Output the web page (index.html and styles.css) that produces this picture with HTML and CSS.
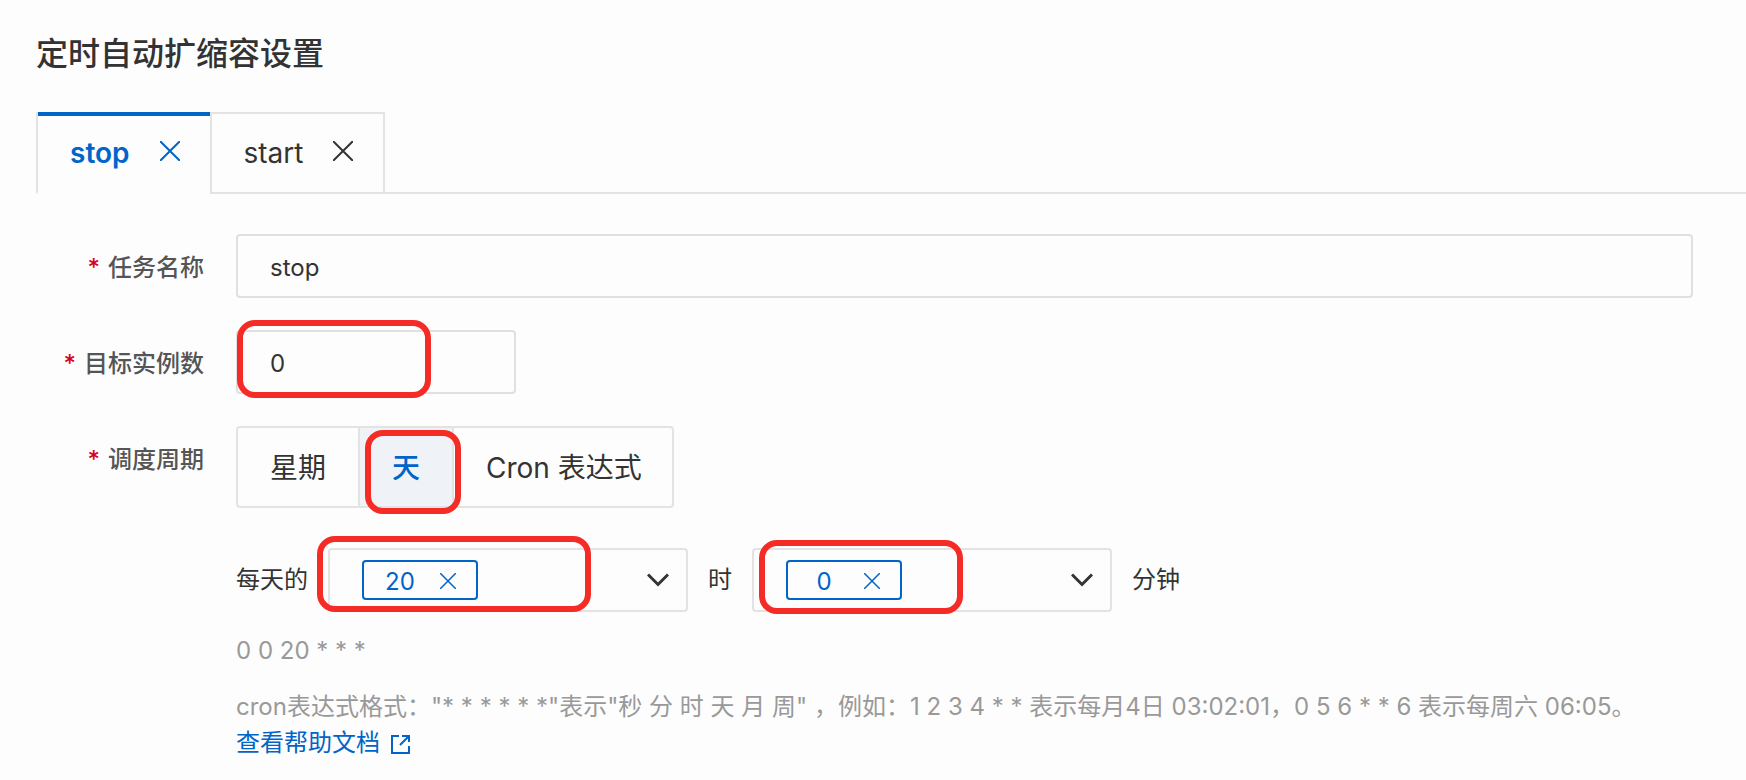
FILE: index.html
```html
<!DOCTYPE html>
<html lang="zh-CN">
<head>
    <meta charset="UTF-8">
    <meta name="viewport" content="width=device-width, initial-scale=1.0">
    <title>定时自动扩缩容设置</title>
    <link rel="stylesheet" href="styles.css">
</head>
<body>

    <h1>定时自动扩缩容设置</h1>

    <div class="tabs">
        <div class="tab active">
            <button type="button" class="tab-name">stop</button>
            <button type="button" class="close" aria-label="关闭 stop">
                <svg width="20" height="20" viewBox="0 0 20 20"><path d="M0 0L20 20M20 0L0 20"/></svg>
            </button>
        </div>
        <div class="tab">
            <button type="button" class="tab-name">start</button>
            <button type="button" class="close" aria-label="关闭 start">
                <svg width="20" height="20" viewBox="0 0 20 20"><path d="M0 0L20 20M20 0L0 20"/></svg>
            </button>
        </div>
    </div>

    <form>
        <div class="row">
            <label class="label" for="taskName">任务名称</label>
            <input class="text" type="text" id="taskName" value="stop">
        </div>

        <div class="row">
            <label class="label" for="target">目标实例数</label>
            <div class="field short">
                <input class="text" type="text" id="target" value="0">
                <span class="mark mark-target"></span>
            </div>
        </div>

        <div class="row">
            <span class="label" id="periodLabel">调度周期</span>
            <div class="field">
                <div class="radios" role="radiogroup" aria-labelledby="periodLabel">
                    <label><input type="radio" name="period" value="week"><span>星期</span></label>
                    <label><input type="radio" name="period" value="day" checked><span>天</span><i class="mark mark-day"></i></label>
                    <label><input type="radio" name="period" value="cron"><span>Cron 表达式</span></label>
                </div>

                <div class="time">
                    <label for="hour">每天的</label>
                    <div class="picker">
                        <span class="tag">
                            <span class="tag-value">20</span>
                            <button type="button" class="close" aria-label="删除 20">
                                <svg width="16" height="16" viewBox="0 0 16 16"><path d="M0 0L16 16M16 0L0 16"/></svg>
                            </button>
                        </span>
                        <select id="hour"><option></option></select>
                        <svg class="arrow" width="22" height="14" viewBox="0 0 22 14"><path d="M1 1.5L11 11.5L21 1.5"/></svg>
                        <span class="mark mark-hour"></span>
                    </div>
                    <label for="minute">时</label>
                    <div class="picker">
                        <span class="tag">
                            <span class="tag-value">0</span>
                            <button type="button" class="close" aria-label="删除 0">
                                <svg width="16" height="16" viewBox="0 0 16 16"><path d="M0 0L16 16M16 0L0 16"/></svg>
                            </button>
                        </span>
                        <select id="minute"><option></option></select>
                        <svg class="arrow" width="22" height="14" viewBox="0 0 22 14"><path d="M1 1.5L11 11.5L21 1.5"/></svg>
                        <span class="mark mark-minute"></span>
                    </div>
                    <span>分钟</span>
                </div>

                <p class="hint">0 0 20 * * *</p>
                <p class="hint">cron表达式格式："* * * * * *"表示"秒 分 时 天 月 周" ，例如：1 2 3 4 * * 表示每月4日 03:02:01，0 5 6 * * 6 表示每周六 06:05。<br>
                    <a href="#">查看帮助文档<svg width="20" height="20" viewBox="0 0 20 20"><path d="M9 2H2V19H19V12M12 2H19V8M19 2L10 11"/></svg></a>
                </p>
            </div>
        </div>
    </form>

</body>
</html>
```
FILE: styles.css
```css
* {
    box-sizing: border-box;
}
body {
    margin: 0;
    padding: 32px 0 8px 36px;
    background-color: #fdfdfd;
    color: #333;
    font-family: Inter, "Noto Sans CJK SC", sans-serif;
    font-size: 24px;
    line-height: 36px;
}
h1 {
    margin: 0 0 36px;
    font-size: 32px;
    font-weight: 500;
    line-height: 44px;
}
button, input, select {
    font: inherit;
    color: inherit;
}
button {
    padding: 0;
    border: none;
    background: none;
    cursor: pointer;
}
svg {
    fill: none;
    stroke: currentColor;
    stroke-width: 2;
}

/* tabs */
.tabs {
    display: flex;
}
.tabs::after {
    content: "";
    flex: 1;
    border-bottom: 2px solid #e3e3e3;
}
.tab {
    display: flex;
    align-items: center;
    gap: 30px;
    height: 82px;
    padding: 0 30px 0 32px;
    border: 2px solid #e3e3e3;
    font-size: 28px;
}
.tab.active {
    position: relative;
    border-right: none;
    border-bottom-color: transparent;
    color: #0064c8;
    font-weight: 600;
}
.tab.active::before {
    content: "";
    position: absolute;
    top: -2px;
    left: 0;
    right: 0;
    height: 4px;
    background-color: #0064c8;
}
.close {
    display: flex;
}
.tab .close {
    padding-bottom: 4px;
}

/* form */
form {
    margin: 40px 53px 0 0;
}
.row {
    display: flex;
    gap: 32px;
    margin-bottom: 32px;
}
.row:last-child {
    margin-bottom: 0;
}
.label {
    width: 168px;
    height: 64px;
    flex-shrink: 0;
    color: #555;
    font-weight: 500;
    line-height: 68px;
    text-align: right;
}
.label::before {
    content: "*";
    margin-right: 8px;
    color: #d9001b;
}
.field {
    position: relative;
    flex: 1;
    min-width: 0;
}
.short {
    flex: 0 0 280px;
}
.text {
    display: block;
    width: 100%;
    height: 64px;
    padding: 2px 32px 0;
    border: 2px solid #e0e0e0;
    border-radius: 4px;
    background: none;
}

.radios {
    display: flex;
    width: fit-content;
    height: 82px;
    border: 2px solid #e3e3e3;
    border-radius: 4px;
    font-size: 28px;
    line-height: 80px;
}
.radios label {
    position: relative;
    height: 78px;
    padding: 0 32px;
}
.radios label:last-child {
    padding-right: 30px;
}
.radios label + label {
    border-left: 2px solid #e3e3e3;
}
.radios input {
    position: absolute;
    opacity: 0;
}
.radios label:has(input:checked) {
    background-color: #eff3f8;
    color: #0064c8;
    font-weight: 500;
}

.time {
    display: flex;
    align-items: center;
    gap: 20px;
    margin: 40px 0 21px;
}
.picker {
    position: relative;
    display: flex;
    align-items: center;
    width: 360px;
    height: 64px;
    padding-left: 32px;
    border: 2px solid #e3e3e3;
    border-radius: 4px;
}
.picker select {
    flex: 1;
    align-self: stretch;
    border: none;
    background: none;
    appearance: none;
}
.tag {
    display: flex;
    align-items: center;
    justify-content: flex-end;
    gap: 20px;
    width: 116px;
    height: 40px;
    padding-right: 20px;
    border: 2px solid #0064c8;
    border-radius: 4px;
    color: #0064c8;
}
.tag-value {
    width: 40px;
    padding-top: 4px;
    text-align: center;
}
.tag .close {
    padding-top: 2px;
}
.tag svg {
    stroke-width: 1.5;
}
.arrow {
    position: absolute;
    right: 17px;
    top: 23px;
    stroke-width: 3;
    pointer-events: none;
}

.hint {
    margin: 0 0 20px;
    color: #999;
}
.hint:last-child {
    margin-bottom: 0;
}
a {
    color: #0064c8;
    text-decoration: none;
}
a svg {
    margin-left: 10px;
    vertical-align: -3px;
}

/* red boxes round the values to fill in */
.mark {
    position: absolute;
    border: 6px solid #f52b25;
    border-radius: 18px;
    pointer-events: none;
}
.mark-target {
    left: 1px;
    top: -10px;
    width: 194px;
    height: 78px;
}
.mark-day {
    left: 5px;
    top: 2px;
    width: 96px;
    height: 84px;
    z-index: 1;
}
.mark-hour {
    left: -13px;
    top: -14px;
    width: 274px;
    height: 76px;
}
.mark-minute {
    left: 5px;
    top: -10px;
    width: 204px;
    height: 74px;
}
```
